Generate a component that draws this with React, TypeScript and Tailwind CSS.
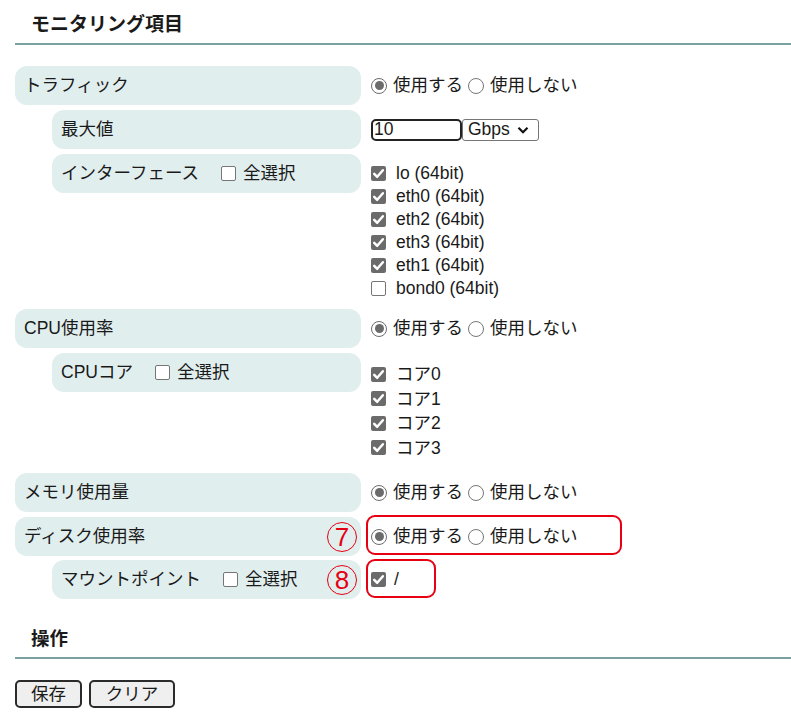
import React from "react";

const Check = ({ checked }: { checked: boolean }) =>
  checked ? (
    <span className="inline-flex w-[15px] h-[15px] shrink-0 rounded-[2px] bg-[#6b6b6b] items-center justify-center">
      <svg viewBox="0 0 15 15" className="w-[15px] h-[15px]">
        <path d="M3.2 7.8 L6.2 10.8 L11.9 4.2" stroke="white" strokeWidth="2.5" fill="none" strokeLinecap="round" strokeLinejoin="round" />
      </svg>
    </span>
  ) : (
    <span className="inline-block w-[15px] h-[15px] shrink-0 rounded-[2px] border border-[#767676] bg-white" />
  );

const Radio = ({ checked }: { checked: boolean }) =>
  checked ? (
    <span className="inline-flex w-[16px] h-[16px] shrink-0 rounded-full border-[1.5px] border-[#6b6b6b] bg-white items-center justify-center">
      <span className="block w-[9px] h-[9px] rounded-full bg-[#6b6b6b]" />
    </span>
  ) : (
    <span className="inline-block w-[16px] h-[16px] shrink-0 rounded-full border border-[#767676] bg-white" />
  );

const UseRadios = () => (
  <div className="h-[39px] flex items-center pl-[5px]">
    <Radio checked />
    <span className="ml-[6px]">使用する</span>
    <span className="ml-[5px] flex"><Radio checked={false} /></span>
    <span className="ml-[6px]">使用しない</span>
  </div>
);

const Label = ({ indent, children }: { indent?: boolean; children: React.ReactNode }) => (
  <div
    className={
      (indent ? "ml-[37px] w-[309px]" : "w-[346px]") +
      " h-[39px] shrink-0 rounded-[12px] bg-[#e1eeee] pl-[9px] flex items-center"
    }
  >
    {children}
  </div>
);

const SelectAll = () => (
  <span className="ml-[22px] flex items-center">
    <Check checked={false} />
    <span className="ml-[7px]">全選択</span>
  </span>
);

const Circled = ({ n }: { n: string }) => (
  <span className="absolute left-[-39px] top-[5px] w-[30px] h-[30px] rounded-full border-[1.5px] border-[#e60012] flex items-center justify-center text-[26px] leading-[22px] text-[#e60012] font-['Liberation_Sans',sans-serif]">
    {n}
  </span>
);

export default function App() {
  const ifaces: [string, boolean][] = [
    ["lo (64bit)", true],
    ["eth0 (64bit)", true],
    ["eth2 (64bit)", true],
    ["eth3 (64bit)", true],
    ["eth1 (64bit)", true],
    ["bond0 (64bit)", false],
  ];
  const cores = ["コア0", "コア1", "コア2", "コア3"];
  return (
    <div className="w-[791px] min-h-[720px] bg-white text-[#1a1a1a] text-[17.5px] font-['Liberation_Sans','Noto_Sans_CJK_JP',sans-serif] pl-[15px]">
      <div className="h-[45px] border-b-2 border-[#78a1a2] pl-[16px] pt-[12px] text-[19px] leading-[26px] font-bold">
        モニタリング項目
      </div>

      <div className="mt-[21px]">
        <div className="flex items-start mb-[5px]">
          <Label>トラフィック</Label>
          <div className="ml-[5px]"><UseRadios /></div>
        </div>

        <div className="flex items-start mb-[5px]">
          <Label indent>最大値</Label>
          <div className="ml-[5px] h-[39px] flex items-center pl-[5px]">
            <input
              readOnly
              value="10"
              className="w-[91px] h-[22px] border-2 border-[#222] rounded-[5px] pl-[1px] text-[17.5px] leading-[18px] outline-none bg-white"
            />
            <span className="w-[77px] h-[22px] border border-[#767676] rounded-[3px] bg-white flex items-center pl-[5px] text-[17.5px]">
              Gbps
              <svg viewBox="0 0 12 12" className="ml-[7px] w-[12px] h-[12px]">
                <path d="M1.5 3.8 L6 8.2 L10.5 3.8" stroke="#111" strokeWidth="2.2" fill="none" />
              </svg>
            </span>
          </div>
        </div>

        <div className="flex items-start mb-[5px]">
          <Label indent>
            インターフェース
            <SelectAll />
          </Label>
          <div className="ml-[5px] pl-[5px] pt-[8px] pb-[4px]">
            {ifaces.map(([n, c]) => (
              <div key={n} className="h-[23px] flex items-center">
                <Check checked={c} />
                <span className="ml-[10px] leading-[23px]">{n}</span>
              </div>
            ))}
          </div>
        </div>

        <div className="flex items-start mb-[5px]">
          <Label>CPU使用率</Label>
          <div className="ml-[5px]"><UseRadios /></div>
        </div>

        <div className="flex items-start mb-[5px]">
          <Label indent>
            CPUコア
            <SelectAll />
          </Label>
          <div className="ml-[5px] pl-[5px] pt-[9px] pb-[8px]">
            {cores.map((n) => (
              <div key={n} className="h-[24.5px] flex items-center">
                <Check checked />
                <span className="ml-[10px] leading-[24px]">{n}</span>
              </div>
            ))}
          </div>
        </div>

        <div className="flex items-start mb-[5px]">
          <Label>メモリ使用量</Label>
          <div className="ml-[5px]"><UseRadios /></div>
        </div>

        <div className="flex items-start mb-[4px]">
          <Label>ディスク使用率</Label>
          <div className="ml-[5px] relative">
            <Circled n="7" />
            <UseRadios />
            <div className="absolute left-0 top-[-2px] w-[256px] h-[40px] border-2 border-[#e60012] rounded-[9px]" />
          </div>
        </div>

        <div className="flex items-start">
          <Label indent>
            マウントポイント
            <SelectAll />
          </Label>
          <div className="ml-[5px] relative h-[39px] flex items-center pl-[5px]">
            <Circled n="8" />
            <Check checked />
            <span className="ml-[8px]">/</span>
            <div className="absolute left-0 top-[-1px] w-[70px] h-[39px] border-2 border-[#e60012] rounded-[9px]" />
          </div>
        </div>
      </div>

      <div className="mt-[15px] h-[45px] border-b-2 border-[#78a1a2] pl-[16px] pt-[12px] text-[18.5px] leading-[26px] font-bold">
        操作
      </div>

      <div className="mt-[21px] flex gap-[7px]">
        <button className="w-[67px] h-[28px] border-2 border-[#2b2b2b] rounded-[5px] bg-[#efefef] text-[17.5px] leading-[20px]">
          保存
        </button>
        <button className="w-[86px] h-[28px] border-2 border-[#2b2b2b] rounded-[5px] bg-[#efefef] text-[17.5px] leading-[20px]">
          クリア
        </button>
      </div>
    </div>
  );
}
